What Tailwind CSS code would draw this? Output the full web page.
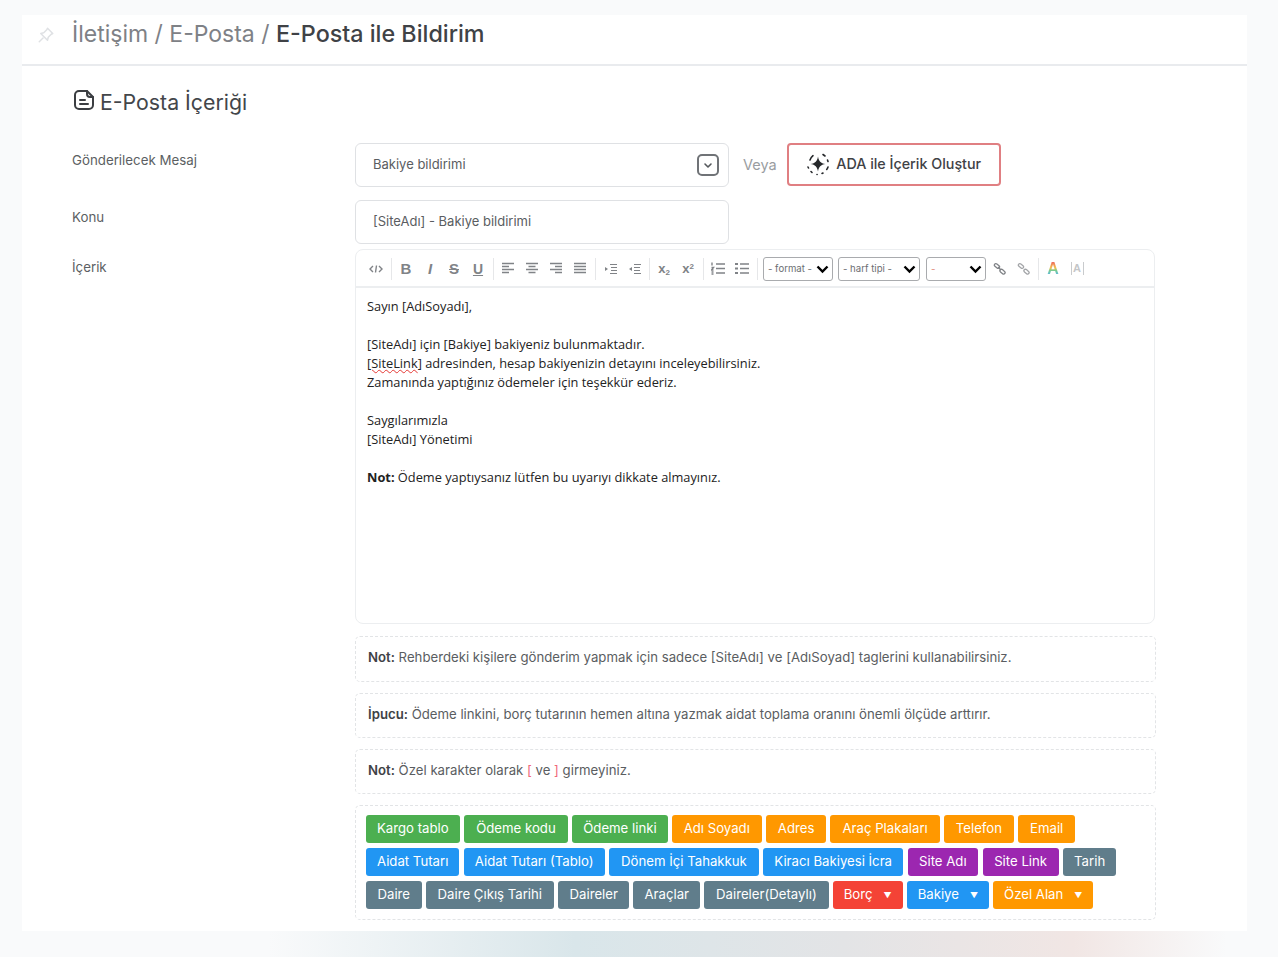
<!DOCTYPE html>
<html lang="tr">
<head>
  <meta charset="utf-8">
  <title>E-Posta ile Bildirim</title>
  <script src="https://cdn.jsdelivr.net/npm/@tailwindcss/browser@4"></script>
</head>
<body class="bg-[#f9fafb] font-['Inter',sans-serif] h-[957px] overflow-hidden">
  <div class="pt-[15px] px-[22px] pr-[31px]">
    <div class="bg-white h-[916px]">
      <!-- Header -->
      <div class="h-[51px] border-b-2 border-[#e9ebee] flex items-start pl-[15px]">
        <svg class="w-[18px] h-[18px] mt-[11px] text-[#dfe1e4]" viewBox="0 0 24 24" fill="none" stroke="currentColor" stroke-width="2" stroke-linejoin="round" stroke-linecap="round"><path d="M14 3l7 7-2 1-4 4-1 4-3-3-3-3-3-3 4-1 4-4z"/><path d="M8 16l-5 5"/></svg>
        <h1 class="ml-[17px] text-[23px] leading-[38px] text-[#7e8186]">İletişim / E-Posta / <span class="font-medium text-[23.300px] text-[#3f4246]">E-Posta ile Bildirim</span></h1>
      </div>

      <!-- Title -->
      <div class="flex items-start pl-[50px] pt-[22px] h-[58px]">
        <svg class="w-[24px] h-[24px] text-[#3b3e42]" viewBox="0 0 24 24" fill="none" stroke="currentColor" stroke-width="2" stroke-linecap="round" stroke-linejoin="round"><path d="M15 3H7a4 4 0 0 0-4 4v10a4 4 0 0 0 4 4h10a4 4 0 0 0 4-4V9z"/><path d="M15 3v3a3 3 0 0 0 3 3h3"/><path d="M8 12h5M8 16h8"/></svg>
        <h2 class="ml-[4px] text-[21.300px] leading-[28px] text-[#43464a]">E-Posta İçeriği</h2>
      </div>

      <!-- Form -->
      <div class="flex pl-[50px] pt-[19px]">
        <div class="w-[283px] text-[13.300px] text-[#5c5f63]">
          <div class="h-[57px] pt-[8px]">Gönderilecek Mesaj</div>
          <div class="h-[50px] pt-[8px]">Konu</div>
          <div class="pt-[8px]">İçerik</div>
        </div>
        <div class="w-[801px]">
          <div class="flex items-start h-[44px]">
            <div class="w-[374px] h-[44px] border border-[#dfe1e4] rounded-[6px] flex items-center justify-between pl-[17px] pr-[9px] text-[13px] text-[#5a5d61]">
              <span>Bakiye bildirimi</span>
              <span class="w-[22px] h-[22px] border-2 border-[#707377] rounded-[5px] flex items-center justify-center">
                <svg class="w-[12px] h-[12px] text-[#55585c]" viewBox="0 0 12 12" fill="none" stroke="currentColor" stroke-width="1.6" stroke-linecap="round" stroke-linejoin="round"><path d="M3 5l3 3 3-3"/></svg>
              </span>
            </div>
            <span class="ml-[14px] mt-[11px] text-[14.500px] text-[#9a9da1]">Veya</span>
            <div class="ml-[10px] w-[214px] h-[43px] pb-[1px] border-2 border-[#e07f82] rounded-[4px] flex items-center justify-center text-[14.300px] font-medium text-[#3f4246]">
              <svg class="w-[24px] h-[24px] mr-[6px] text-[#26282b]" viewBox="0 0 24 24" fill="none" stroke="currentColor" stroke-linecap="round"><path fill="currentColor" stroke="none" d="M12 4.500c.8 4.800 2.700 6.700 7.500 7.500-4.800.8-6.700 2.700-7.500 7.500-.8-4.800-2.700-6.700-7.500-7.500 4.800-.8 6.700-2.700 7.500-7.500z"/><path stroke-width="1.600" d="M4 8c.6-1.700 1.500-3 3-4.300M17 2.500l2 1.500M21.500 8l.5 1.500M22 15c-.3 1-.7 1.800-1.300 2.500M2 15l.5 1M5 19.500l1 1M11 22.500h.1M16 21.500l1-.5"/></svg>
              ADA ile İçerik Oluştur
            </div>
          </div>

          <div class="mt-[13px] w-[374px] h-[44px] border border-[#dfe1e4] rounded-[6px] flex items-center pl-[17px] text-[13px] text-[#5a5d61]">[SiteAdı] - Bakiye bildirimi</div>

          <!-- Editor -->
          <div class="mt-[5px] w-[800px] h-[375px] border border-[#eceef0] rounded-[8px]">
            <div class="h-[38px] border-b-2 border-[#eceef0] flex items-center pl-[8px] pt-[1px] text-[#808387]">
              <span class="w-6 flex justify-center"><svg class="w-[14px] h-[10px]" viewBox="0 0 14 10" fill="none" stroke="currentColor" stroke-width="1.400"><path d="M4 2L1 5l3 3M10 2l3 3-3 3M7.500 1.500l-1 7"/></svg></span>
              <span class="w-px h-[22px] bg-[#e6e7e9] ml-[3px] mr-[2px]"></span>
              <span class="w-6 mt-[1px] text-center font-['Liberation_Sans',sans-serif] text-[15px] font-bold">B</span>
              <span class="w-6 mt-[1px] text-center font-['Liberation_Sans',sans-serif] text-[15px] font-bold italic">I</span>
              <span class="w-6 mt-[1px] text-center font-['Liberation_Sans',sans-serif] text-[15px] font-bold line-through">S</span>
              <span class="w-6 mt-[1px] text-center font-['Liberation_Sans',sans-serif] text-[14px] font-bold underline">U</span>
              <span class="w-px h-[22px] bg-[#e6e7e9] ml-[3px] mr-[2px]"></span>
              <span class="w-6 flex justify-center"><svg class="w-[14px] h-[13px]" viewBox="0 0 14 13" stroke="currentColor" stroke-width="1.400"><path d="M1 1.500h12M1 4.500h7M1 7.500h12M1 10.500h7"/></svg></span>
              <span class="w-6 flex justify-center"><svg class="w-[14px] h-[13px]" viewBox="0 0 14 13" stroke="currentColor" stroke-width="1.400"><path d="M1 1.500h12M3.500 4.500h7M1 7.500h12M3.500 10.500h7"/></svg></span>
              <span class="w-6 flex justify-center"><svg class="w-[14px] h-[13px]" viewBox="0 0 14 13" stroke="currentColor" stroke-width="1.400"><path d="M1 1.500h12M6 4.500h7M1 7.500h12M6 10.500h7"/></svg></span>
              <span class="w-6 flex justify-center"><svg class="w-[14px] h-[13px]" viewBox="0 0 14 13" stroke="currentColor" stroke-width="1.400"><path d="M1 1.500h12M1 4.500h12M1 7.500h12M1 10.500h12"/></svg></span>
              <span class="w-px h-[22px] bg-[#e6e7e9] ml-[3px] mr-[2px]"></span>
              <span class="w-6 flex justify-center"><svg class="w-[13px] h-[12px]" viewBox="0 0 13 12" fill="currentColor"><path d="M1 4l3 2-3 2z"/><path stroke="currentColor" d="M6 1.500h7M7 4.500h6M7 7.500h6M6 10.500h7"/></svg></span>
              <span class="w-6 flex justify-center"><svg class="w-[13px] h-[12px]" viewBox="0 0 13 12" fill="currentColor"><path d="M4 4L1 6l3 2z"/><path stroke="currentColor" d="M6 1.500h7M6 4.500h6M6 7.500h6M6 10.500h7"/></svg></span>
              <span class="w-px h-[22px] bg-[#e6e7e9] ml-[3px] mr-[2px]"></span>
              <span class="w-6 text-center font-['Liberation_Sans',sans-serif] text-[13px] font-bold">x<sub class="text-[8px]">2</sub></span>
              <span class="w-6 text-center font-['Liberation_Sans',sans-serif] text-[13px] font-bold">x<sup class="text-[8px]">2</sup></span>
              <span class="w-px h-[22px] bg-[#e6e7e9] ml-[3px] mr-[2px]"></span>
              <span class="w-6 flex justify-center"><svg class="w-[14px] h-[13px]" viewBox="0 0 14 13" stroke="currentColor" stroke-width="1.400" fill="none"><path d="M5 2h9M5 6.500h9M5 11h9M1 .500v3M.500 5.500h2l-2 2.500h2M.500 10h2M.500 12h2"/></svg></span>
              <span class="w-6 flex justify-center"><svg class="w-[14px] h-[13px]" viewBox="0 0 14 13" stroke="currentColor" stroke-width="1.400" fill="currentColor"><path d="M5 2h9M5 6.500h9M5 11h9"/><path stroke="none" d="M0 1h3v2H0zM0 5.500h3v2H0zM0 10h3v2H0z"/></svg></span>
              <span class="w-px h-[22px] bg-[#e6e7e9] ml-[3px] mr-[2px]"></span>
              <div class="ml-[3px] w-[70px] h-[24px] border border-[#a9abae] rounded-[3px] flex items-center justify-between pl-[4px] pr-[3px] text-[9.600px] text-[#6b6e72]">
                <span class="pt-[2px]">- format -</span>
                <svg class="w-[13px] h-[10px] text-black" viewBox="0 0 13 10" fill="none" stroke="currentColor" stroke-width="2.400"><path d="M1.500 2.500l5 5 5-5"/></svg>
              </div>
              <div class="ml-[5px] w-[82px] h-[24px] border border-[#a9abae] rounded-[3px] flex items-center justify-between pl-[4px] pr-[3px] text-[9.600px] text-[#6b6e72]">
                <span class="pt-[2px]">- harf tipi -</span>
                <svg class="w-[13px] h-[10px] text-black" viewBox="0 0 13 10" fill="none" stroke="currentColor" stroke-width="2.400"><path d="M1.500 2.500l5 5 5-5"/></svg>
              </div>
              <div class="ml-[6px] w-[60px] h-[24px] border border-[#a9abae] rounded-[3px] flex items-center justify-between pl-[4px] pr-[3px] text-[9.600px] text-[#e08a7a]">
                <span class="pt-[2px]">-</span>
                <svg class="w-[13px] h-[10px] text-black" viewBox="0 0 13 10" fill="none" stroke="currentColor" stroke-width="2.400"><path d="M1.500 2.500l5 5 5-5"/></svg>
              </div>
              <span class="ml-[1px] w-6 flex justify-center"><svg class="w-[13px] h-[13px]" viewBox="0 0 13 13" fill="none" stroke="currentColor" stroke-width="1.300"><rect x="-2.200" y="-1.400" width="5.800" height="3" rx="1.500" transform="translate(3.500 3.500) rotate(40)"/><rect x="-2.800" y="-1.400" width="5.800" height="3" rx="1.500" transform="translate(9.500 9.500) rotate(40)"/><path d="M5 5l3 3"/></svg></span>
              <span class="w-6 flex justify-center"><svg class="w-[13px] h-[13px] text-[#a3a5a8]" viewBox="0 0 13 13" fill="none" stroke="currentColor" stroke-width="1.300"><rect x="-2.200" y="-1.400" width="5.800" height="3" rx="1.500" transform="translate(3.500 3.500) rotate(40)"/><rect x="-2.800" y="-1.400" width="5.800" height="3" rx="1.500" transform="translate(9.500 9.500) rotate(40)"/></svg></span>
              <span class="w-px h-[22px] bg-[#e6e7e9] ml-[3px] mr-[2px]"></span>
              <span class="w-6 flex justify-center"><span class="font-['Liberation_Sans',sans-serif] text-[16px] leading-[13px] font-bold bg-[linear-gradient(#ee6a5e,#f2c14e_45%,#7ccb8f_65%,#58b8e8)] bg-clip-text text-transparent">A</span></span>
              <span class="w-6 flex justify-center"><span class="w-[13px] h-[13px] border-x border-[#c9cbcd] text-center font-['Liberation_Sans',sans-serif] text-[11px] leading-[13px] font-bold text-[#c4c6c8]">A</span></span>
            </div>
            <div class="pl-[11px] pt-[9px] font-['Open_Sans',sans-serif] text-[12.800px] leading-[19px] text-[#222]">
              <p>Sayın [AdıSoyadı],</p>
              <p class="mt-[19px]">[SiteAdı] için [Bakiye] bakiyeniz bulunmaktadır.</p>
              <p><span class="underline decoration-wavy decoration-[#e53935] decoration-1">[SiteLink</span>] adresinden, hesap bakiyenizin detayını inceleyebilirsiniz.</p>
              <p>Zamanında yaptığınız ödemeler için teşekkür ederiz.</p>
              <p class="mt-[19px]">Saygılarımızla</p>
              <p>[SiteAdı] Yönetimi</p>
              <p class="mt-[19px]"><b>Not:</b> Ödeme yaptıysanız lütfen bu uyarıyı dikkate almayınız.</p>
            </div>
          </div>

          <!-- Notes -->
          <div class="mt-[12px] h-[46px] pb-[2px] border border-dashed border-[#e2e4e6] rounded-[5px] flex items-center pl-[12px] text-[13.200px] text-[#5a5d61]"><p><b class="font-semibold text-[#3f4246]">Not:</b> Rehberdeki kişilere gönderim yapmak için sadece [SiteAdı] ve [AdıSoyad] taglerini kullanabilirsiniz.</p></div>
          <div class="mt-[11px] h-[45px] pb-[2px] border border-dashed border-[#e2e4e6] rounded-[5px] flex items-center pl-[12px] text-[13.200px] text-[#5a5d61]"><p><b class="font-semibold text-[#3f4246]">İpucu:</b> Ödeme linkini, borç tutarının hemen altına yazmak aidat toplama oranını önemli ölçüde arttırır.</p></div>
          <div class="mt-[11px] h-[45px] pb-[2px] border border-dashed border-[#e2e4e6] rounded-[5px] flex items-center pl-[12px] text-[13.200px] text-[#5a5d61]"><p><b class="font-semibold text-[#3f4246]">Not:</b> Özel karakter olarak <span class="text-[#f0677a]">[</span> ve <span class="text-[#f0677a]">]</span> girmeyiniz.</p></div>

          <!-- Tags -->
          <div class="mt-[11px] h-[115px] border border-dashed border-[#e2e4e6] rounded-[5px] pl-[10px] pt-[9px] text-[13.200px] text-white flex flex-col gap-[5px] whitespace-nowrap">
            <div class="flex gap-[4px] h-[28px]">
              <span class="px-[11px] leading-[27px] rounded-[3px] bg-[#4caf50]">Kargo tablo</span>
              <span class="px-[12.500px] leading-[27px] rounded-[3px] bg-[#4caf50]">Ödeme kodu</span>
              <span class="px-[11px] leading-[27px] rounded-[3px] bg-[#4caf50]">Ödeme linki</span>
              <span class="px-[12px] leading-[27px] rounded-[3px] bg-[#ff9800]">Adı Soyadı</span>
              <span class="px-[12px] leading-[27px] rounded-[3px] bg-[#ff9800]">Adres</span>
              <span class="px-[12px] leading-[27px] rounded-[3px] bg-[#ff9800]">Araç Plakaları</span>
              <span class="px-[12px] leading-[27px] rounded-[3px] bg-[#ff9800]">Telefon</span>
              <span class="px-[12px] leading-[27px] rounded-[3px] bg-[#ff9800]">Email</span>
            </div>
            <div class="flex gap-[4.500px] h-[28px]">
              <span class="px-[11px] leading-[27px] rounded-[3px] bg-[#2196f3]">Aidat Tutarı</span>
              <span class="px-[11px] leading-[27px] rounded-[3px] bg-[#2196f3]">Aidat Tutarı (Tablo)</span>
              <span class="px-[12px] leading-[27px] rounded-[3px] bg-[#2196f3]">Dönem İçi Tahakkuk</span>
              <span class="px-[11px] leading-[27px] rounded-[3px] bg-[#2196f3]">Kiracı Bakiyesi İcra</span>
              <span class="px-[11.500px] leading-[27px] rounded-[3px] bg-[#9c27b0]">Site Adı</span>
              <span class="px-[11.500px] leading-[27px] rounded-[3px] bg-[#9c27b0]">Site Link</span>
              <span class="px-[11px] leading-[27px] rounded-[3px] bg-[#607d8b]">Tarih</span>
            </div>
            <div class="flex gap-[4px] h-[28px]">
              <span class="px-[11.500px] leading-[27px] rounded-[3px] bg-[#607d8b]">Daire</span>
              <span class="px-[12px] leading-[27px] rounded-[3px] bg-[#607d8b]">Daire Çıkış Tarihi</span>
              <span class="px-[11.500px] leading-[27px] rounded-[3px] bg-[#607d8b]">Daireler</span>
              <span class="px-[11px] leading-[27px] rounded-[3px] bg-[#607d8b]">Araçlar</span>
              <span class="px-[12px] leading-[27px] rounded-[3px] bg-[#607d8b]">Daireler(Detaylı)</span>
              <span class="px-[11px] leading-[27px] rounded-[3px] bg-[#f44336]">Borç<span class="ml-[11px] text-[8px] align-[1px]">▼</span></span>
              <span class="px-[11px] leading-[27px] rounded-[3px] bg-[#2196f3]">Bakiye<span class="ml-[11px] text-[8px] align-[1px]">▼</span></span>
              <span class="px-[11px] leading-[27px] rounded-[3px] bg-[#ff9800]">Özel Alan<span class="ml-[11px] text-[8px] align-[1px]">▼</span></span>
            </div>
          </div>
        </div>
      </div>
    </div>
  </div>
  <div class="h-[26px] bg-[linear-gradient(90deg,#f9fafb_21%,#d9e6ea_45%,#e3e4e6_66%,#f1e6e4_84%,#f9fafb_96%)]"></div>
</body>
</html>
